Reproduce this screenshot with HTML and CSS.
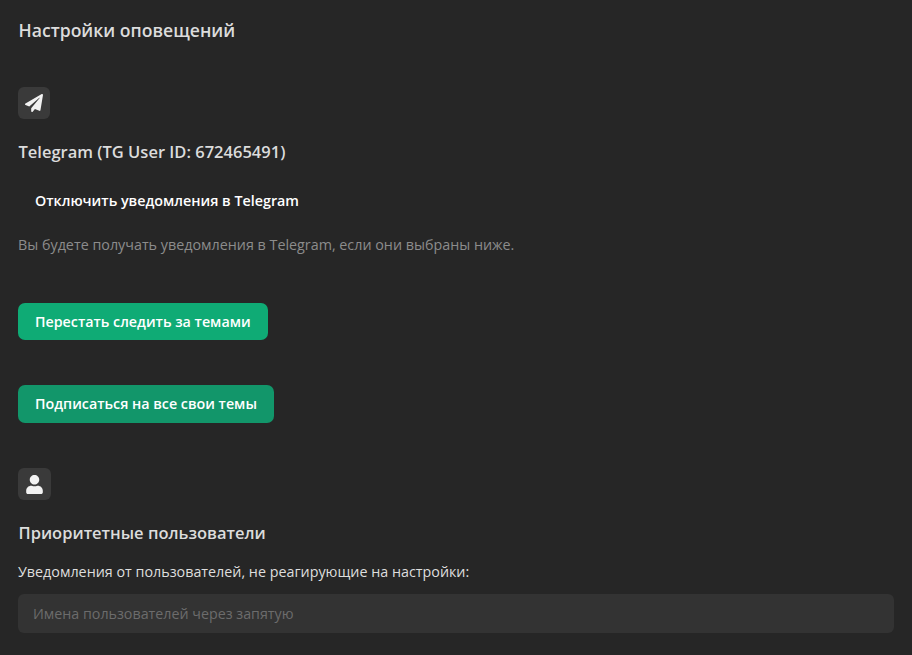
FILE: index.html
```html
<!DOCTYPE html>
<html lang="ru">
<head>
<meta charset="utf-8">
<title>Настройки оповещений</title>
<link rel="stylesheet" href="styles.css">
</head>
<body>
<main class="page">
  <h1 class="title">Настройки оповещений</h1>
  <section class="telegram">
    <div class="icon-box">
      <svg class="icon" width="18" height="18" viewBox="0 0 512 512" aria-hidden="true"><path fill="#f2f2f2" d="M476 3.200L12.500 270.600c-18.100 10.400-15.800 35.600 2.200 43.200L121 358.400l287.300-253.200c5.500-4.900 13.300 2.600 8.600 8.300L176 407v80.500c0 23.600 28.500 32.900 42.500 15.800L282 426l124.600 52.200c14.200 6 30.400-2.900 33-18.200l72-432C515 7.800 493.300-6.800 476 3.200z"/></svg>
    </div>
    <h2 class="heading heading-tg">Telegram (TG User ID: 672465491)</h2>
    <div class="toggle-label">Отключить уведомления в Telegram</div>
    <p class="hint">Вы будете получать уведомления в Telegram, если они выбраны ниже.</p>
    <div class="actions">
      <button class="btn btn-a">Перестать следить за темами</button>
      <button class="btn btn-b">Подписаться на все свои темы</button>
    </div>
  </section>
  <section class="priority">
    <div class="icon-box">
      <svg class="icon" width="17" height="19" viewBox="0 0 448 512" aria-hidden="true"><path fill="#f2f2f2" d="M224 256c70.700 0 128-57.300 128-128S294.700 0 224 0 96 57.300 96 128s57.300 128 128 128zm89.600 32h-16.700c-22.200 10.200-46.900 16-72.900 16s-50.600-5.800-72.900-16h-16.700C60.200 288 0 348.200 0 422.400V464c0 26.500 21.500 48 48 48h352c26.500 0 48-21.500 48-48v-41.600c0-74.200-60.200-134.400-134.400-134.400z"/></svg>
    </div>
    <h2 class="heading heading-pr">Приоритетные пользователи</h2>
    <label class="field-label" for="users">Уведомления от пользователей, не реагирующие на настройки:</label>
    <input class="field" id="users" type="text" placeholder="Имена пользователей через запятую">
  </section>
</main>
</body>
</html>
```

FILE: styles.css
```css
* { box-sizing: border-box; }
html, body { margin: 0; height: 100%; }
body {
  background: #262626;
  color: #e0e0e0;
  font-family: "Open Sans", "Noto Sans", sans-serif;
  overflow: hidden;
}
.page { padding: 18px 18px 0; }
.title {
  margin: 0;
  padding-left: 0.5px;
  font-size: 17.6px;
  line-height: 24px;
  font-weight: 600;
  color: #dcdcdc;
}
.telegram { margin-top: 45px; }
.icon-box {
  width: 32px;
  height: 32px;
  border-radius: 6px;
  background: #3a3a3a;
  display: flex;
  align-items: center;
  justify-content: center;
}
.heading {
  margin: 0;
  padding-left: 0.5px;
  font-size: 16.5px;
  line-height: 24px;
  font-weight: 600;
  color: #dcdcdc;
}
.heading-tg { margin-top: 21px; }
.toggle-label {
  margin-top: 27px;
  padding-left: 17px;
  font-size: 14.3px;
  line-height: 20px;
  font-weight: 600;
  color: #fff;
}
.hint {
  margin: 24px 0 0;
  font-size: 14.32px;
  line-height: 20px;
  color: #8c8c8c;
}
.actions {
  margin-top: 48px;
  display: flex;
  flex-direction: column;
  align-items: flex-start;
  gap: 45px;
}
.btn {
  border: 0;
  height: 37px;
  padding: 0 17px;
  border-radius: 7px;
  font: 600 14.28px/20px "Open Sans", "Noto Sans", sans-serif;
  color: #fff;
}
.btn-a { background: #0fab75; }
.btn-b { background: #12966a; height: 38px; }
.priority { margin-top: 45px; }
.priority .icon-box { width: 33px; }
.heading-pr { margin-top: 21px; }
.field-label {
  display: block;
  margin-top: 17px;
  font-size: 14.32px;
  line-height: 20px;
  color: #dedede;
}
.field {
  display: block;
  margin-top: 12px;
  width: 100%;
  height: 39px;
  padding: 0 15px;
  border: 0;
  border-radius: 6px;
  background: #333333;
  color: #e0e0e0;
  font: 14.28px/20px "Open Sans", "Noto Sans", sans-serif;
}
.field::placeholder { color: #6c6c6c; opacity: 1; }
```
